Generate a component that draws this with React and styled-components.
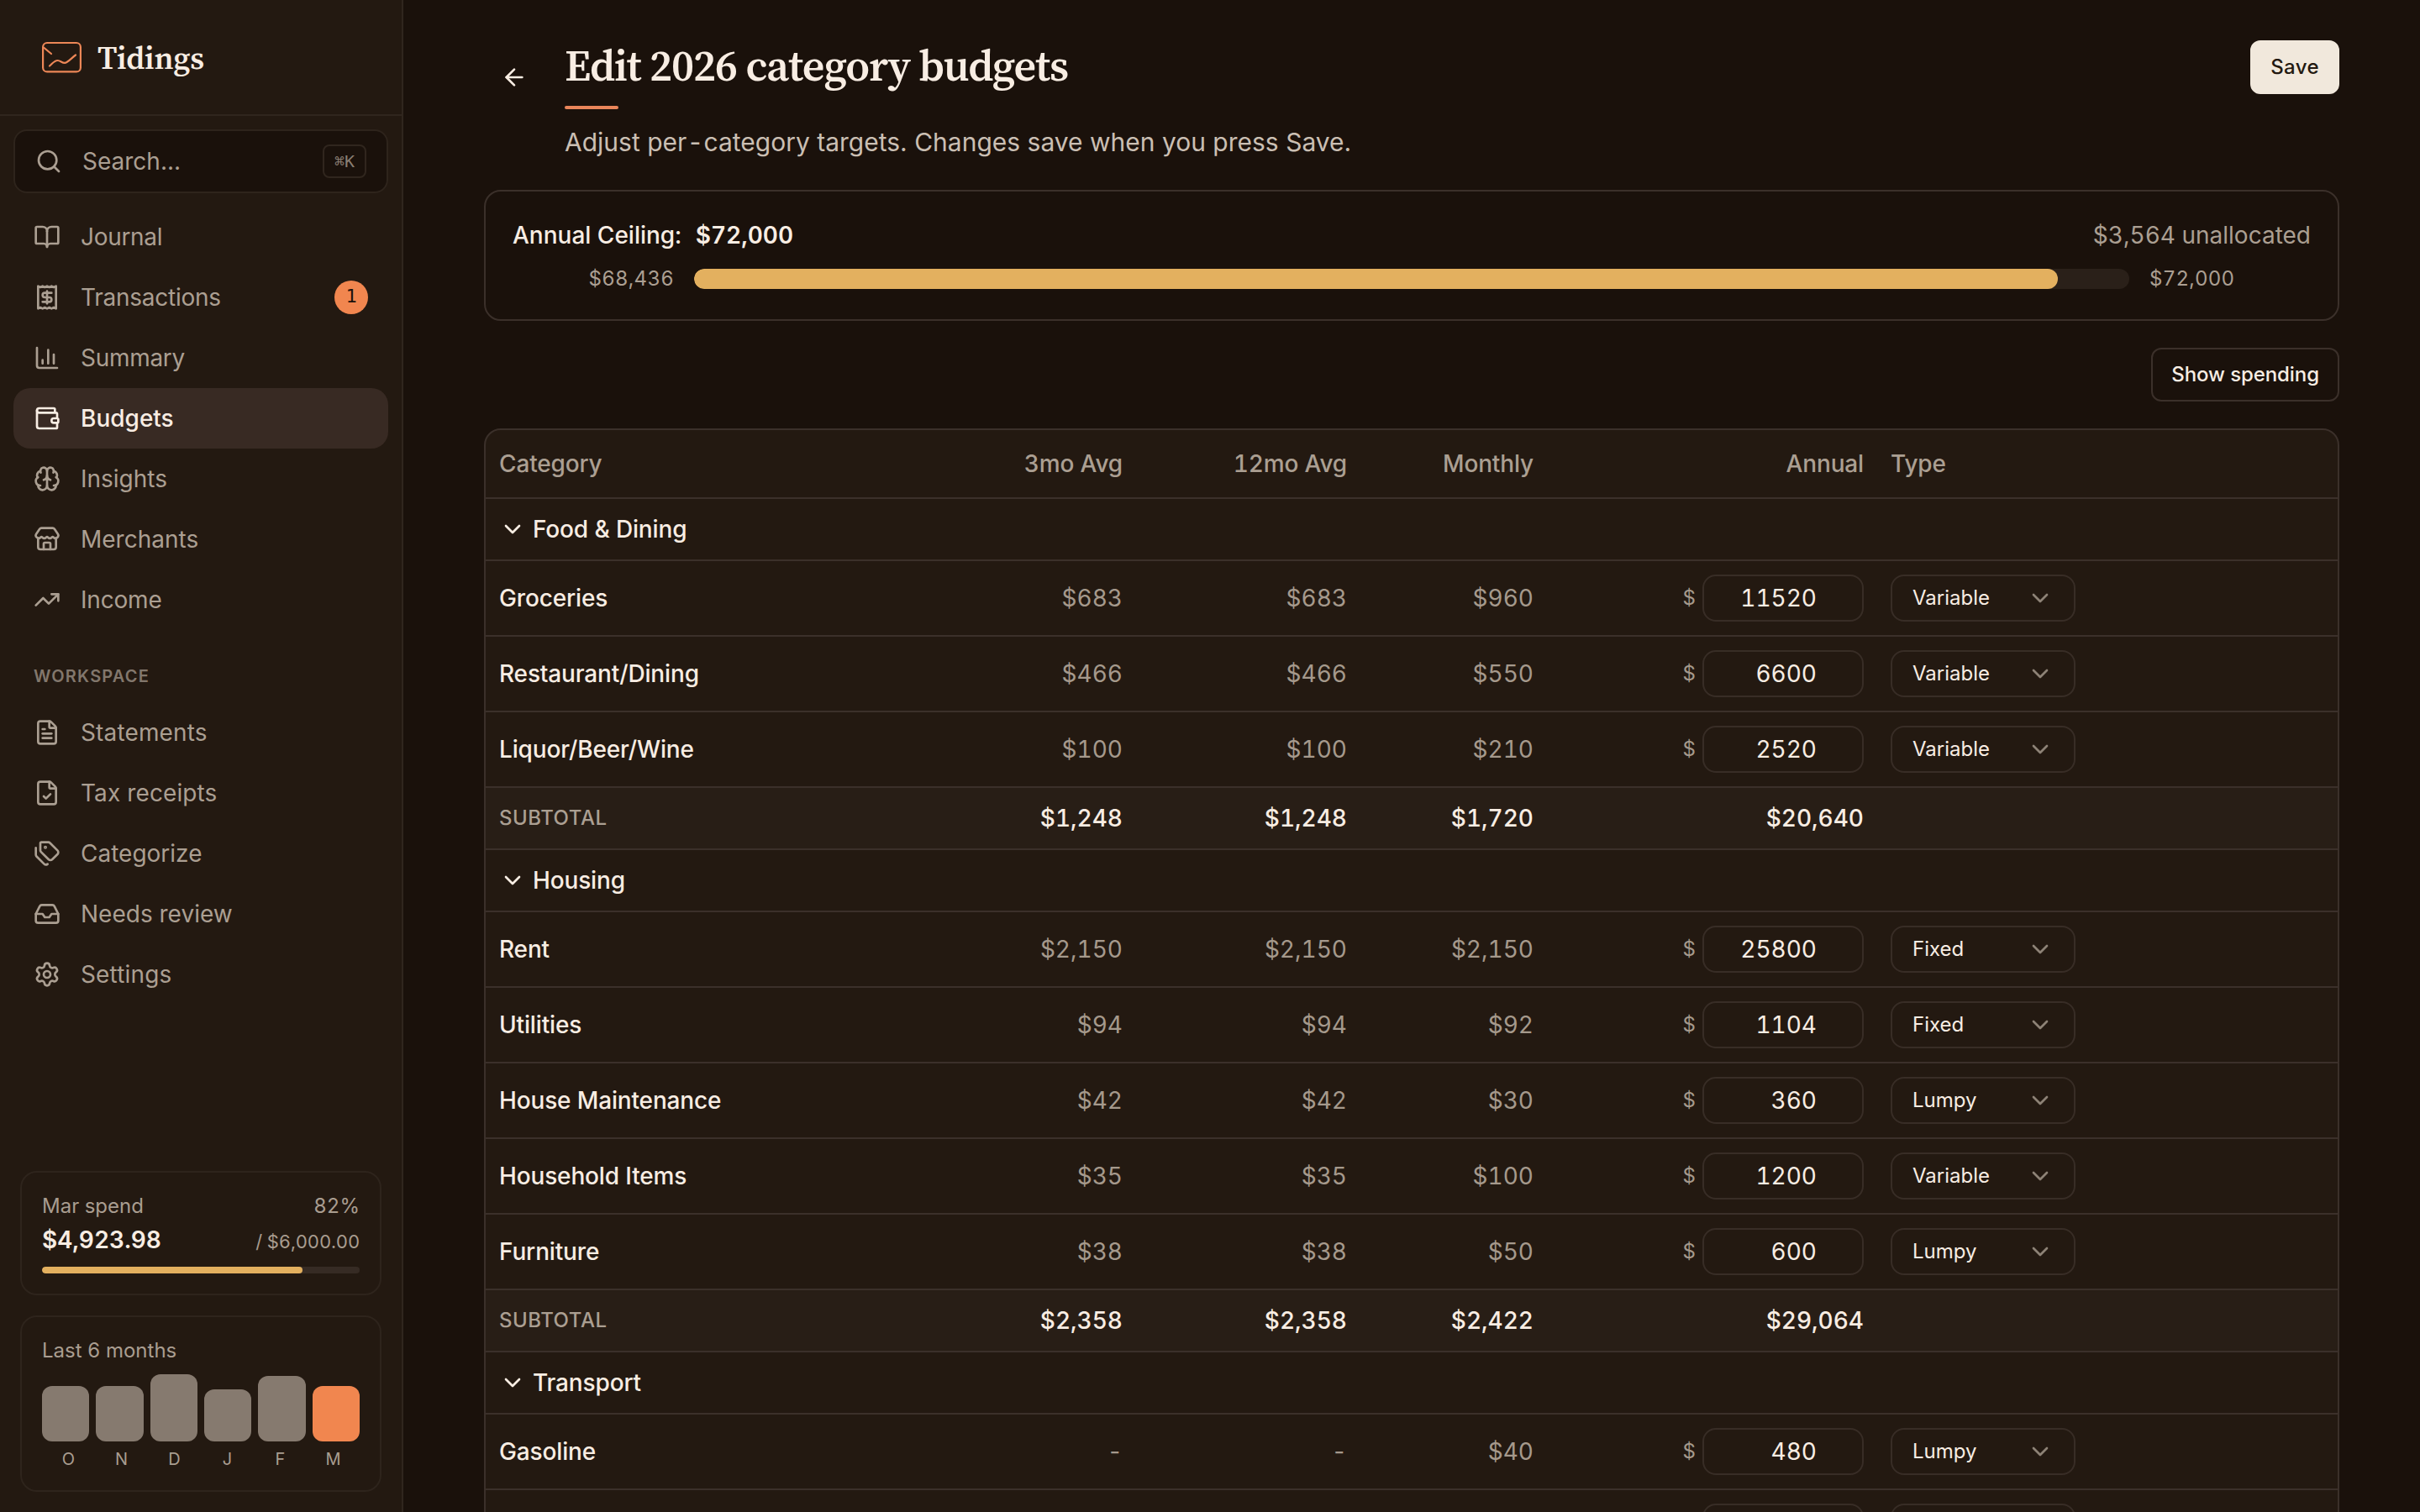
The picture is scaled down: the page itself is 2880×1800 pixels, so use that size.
import React from 'react';
import styled, { createGlobalStyle } from 'styled-components';
import {
  ArrowLeft,
  BookOpen,
  Brain,
  ChartColumn,
  ChevronDown,
  FileCheck,
  FileText,
  Inbox,
  Receipt,
  Search,
  Settings,
  Store,
  Tags,
  TrendingUp,
  Wallet,
} from 'lucide-react';

const GlobalStyle = createGlobalStyle`
  * {
    box-sizing: border-box;
  }

  body {
    margin: 0;
    background: #1a110b;
    color: #f8ede3;
    font-family: Inter, 'Liberation Sans', sans-serif;
    font-size: 28px;
    line-height: 40px;
  }

  button, input {
    font: inherit;
    color: inherit;
  }
`;

const serif = "'Source Serif 4', 'Source Serif Pro', 'Noto Serif CJK SC', 'Noto Serif', 'Liberation Serif', serif";
const mono = "'DejaVu Sans Mono', 'Liberation Mono', monospace";

const Page = styled.div`
  display: flex;
  height: 1800px;
  overflow: hidden;
`;

/* ---------- sidebar ---------- */

const Sidebar = styled.aside`
  display: flex;
  flex-direction: column;
  flex: none;
  width: 480px;
  height: 100%;
  background: #231911;
  border-right: 2px solid #30261e;
`;

const Brand = styled.div`
  display: flex;
  align-items: center;
  gap: 18px;
  height: 138px;
  padding: 0 48px;
  border-bottom: 2px solid #30261e;
`;

const BrandName = styled.span`
  padding-top: 2px;
  font-family: ${serif};
  font-size: 38px;
  font-weight: 600;
  letter-spacing: -0.3px;
  line-height: 48px;
`;

const SearchBox = styled.div`
  display: flex;
  align-items: center;
  gap: 24px;
  height: 76px;
  margin: 16px;
  padding: 0 24px;
  background: #1a110b;
  border: 2px solid #2e241c;
  border-radius: 16px;
  color: #ab9f92;

  span {
    flex: 1;
  }
`;

const Kbd = styled.kbd`
  display: flex;
  align-items: center;
  justify-content: center;
  width: 52px;
  height: 40px;
  border: 2px solid #30261e;
  border-radius: 8px;
  color: #8a7f73;
  font-family: ${mono};
  font-size: 20px;
  line-height: 30px;
`;

const Nav = styled.nav`
  display: flex;
  flex-direction: column;
  padding: 0 16px;
`;

const NavItem = styled.a`
  display: flex;
  align-items: center;
  gap: 24px;
  height: 72px;
  padding: 0 24px;
  border-radius: 20px;
  color: ${(props) => (props.$active ? '#f8ede3' : '#ab9f92')};
  background: ${(props) => (props.$active ? '#382a23' : 'transparent')};
  font-weight: ${(props) => (props.$active ? 500 : 400)};
  letter-spacing: ${(props) => props.$tracking || 0}px;

  span {
    flex: 1;
  }
`;

const Badge = styled.em`
  width: 40px;
  height: 40px;
  border-radius: 50%;
  background: #f1864f;
  color: #1a110b;
  font-family: ${mono};
  font-size: 22px;
  font-style: normal;
  letter-spacing: 0;
  line-height: 37px;
  text-align: center;
`;

const NavHeading = styled.h2`
  margin: 0;
  padding: 40px 24px 16px;
  color: #82776c;
  font-size: 20px;
  font-weight: 600;
  letter-spacing: 1.2px;
  line-height: 30px;
  text-transform: uppercase;
`;

const SidebarCards = styled.div`
  display: flex;
  flex-direction: column;
  gap: 24px;
  margin-top: auto;
  padding: 24px;
`;

const MiniCard = styled.section`
  padding: 24px;
  border: 2px solid #2e241c;
  border-radius: 20px;
  color: #a99d90;
  font-size: 24px;
  line-height: 32px;
`;

const SplitRow = styled.div`
  display: flex;
  align-items: baseline;
  justify-content: space-between;
  font-variant-numeric: tabular-nums;
`;

const SpendRow = styled(SplitRow)`
  height: 40px;
  margin: 4px 0 12px;
  line-height: 40px;

  strong {
    color: #f8ede3;
    font-size: 28px;
    font-weight: 600;
  }

  span {
    font-size: 22px;
    letter-spacing: -0.15px;
  }
`;

const Track = styled.div`
  flex: 1;
  height: ${(props) => props.$height}px;
  border-radius: ${(props) => props.$height / 2}px;
  background: ${(props) => props.$color};
  overflow: hidden;
`;

const Fill = styled.div`
  height: 100%;
  border-radius: inherit;
  background: #e3b05f;
`;

const Bars = styled.div`
  display: flex;
  align-items: flex-end;
  gap: 8px;
  height: 80px;
  margin-top: 12px;
`;

const Bar = styled.div`
  flex: 1;
  border-radius: 12px;
  background: ${(props) => (props.$current ? '#f1864f' : '#867a6f')};
`;

const BarLabels = styled.div`
  display: grid;
  grid-template-columns: repeat(6, 1fr);
  margin-top: 8px;
  font-size: 20px;
  line-height: 26px;
  text-align: center;
`;

/* ---------- main ---------- */

const Main = styled.main`
  flex: 1;
  display: flex;
  flex-direction: column;
  gap: 32px;
  padding: 48px 96px 0;
`;

const Header = styled.header`
  display: flex;
  flex: none;
  align-items: flex-start;
  height: 146px;
`;

const BackButton = styled.button`
  display: flex;
  align-items: center;
  justify-content: center;
  width: 72px;
  height: 72px;
  margin: 8px 24px 0 0;
  padding: 0;
  border: 0;
  background: none;
`;

const Heading = styled.div`
  flex: 1;
`;

const Title = styled.h1`
  margin: 0;
  font-family: ${serif};
  font-size: 52px;
  font-weight: 600;
  letter-spacing: -1.08px;
  line-height: 60px;
`;

const Accent = styled.div`
  width: 64px;
  height: 4px;
  margin: 18px 0 17px;
  border-radius: 2px;
  background: #ea855a;
`;

const Subtitle = styled.p`
  margin: 0;
  color: #cabfb3;
  font-size: 30px;
  line-height: 44px;
`;

const Hyphen = styled.span`
  margin: 0 3.2px;
`;

const Button = styled.button`
  height: 64px;
  padding: 0 22px;
  border: 2px solid ${(props) => (props.$primary ? '#f1e8dc' : '#3b302a')};
  border-radius: 12px;
  background: ${(props) => (props.$primary ? '#f1e8dc' : 'transparent')};
  color: ${(props) => (props.$primary ? '#231911' : '#f8ede3')};
  font-size: 24px;
  font-weight: 500;
  letter-spacing: ${(props) => (props.$primary ? 0.4 : -0.08)}px;
  line-height: 36px;
`;

const CeilingCard = styled.section`
  flex: none;
  height: 156px;
  padding: 32px;
  border: 2px solid #3b302a;
  border-radius: 20px;
`;

const CeilingTop = styled(SplitRow)`
  color: #ab9f92;

  div {
    color: #f8ede3;
    font-weight: 500;
  }

  strong {
    margin-left: 17px;
    font-weight: 600;
  }
`;

const CeilingBar = styled.div`
  display: flex;
  align-items: center;
  gap: 24px;
  margin-top: 16px;
  color: #ab9f92;
  font-size: 24px;
  font-variant-numeric: tabular-nums;
  letter-spacing: 0.25px;
  line-height: 32px;
`;

const CeilingLabel = styled.span`
  width: 192px;
  text-align: ${(props) => props.$align};
`;

const Toolbar = styled.div`
  display: flex;
  flex: none;
  justify-content: flex-end;
`;

const Table = styled.section`
  flex: none;
  border: 2px solid #3b302a;
  border-radius: 20px;
  background: #231911;
  overflow: hidden;
`;

const Row = styled.div`
  display: grid;
  grid-template-columns: 541px 233px 267px 222px 393px 1fr;
  align-items: center;
  height: ${(props) => props.$height || 90}px;
  border-bottom: 2px solid #3b302a;
  background: ${(props) => props.$bg || 'transparent'};
  color: ${(props) => props.$color || '#f8ede3'};
  font-variant-numeric: tabular-nums;
  font-weight: 500;
`;

const Cell = styled.div`
  padding: 0 16px;
  text-align: ${(props) => props.$align || 'left'};
`;

const HeadCell = styled(Cell)`
  letter-spacing: -0.15px;
`;

const NameCell = styled(Cell)`
  letter-spacing: -0.15px;
`;

const MutedCell = styled(Cell)`
  color: #a5998c;
  font-weight: 400;
`;

const GroupName = styled.div`
  display: flex;
  align-items: center;
  gap: 8px;
  padding: 0 16px;
  letter-spacing: -0.15px;
`;

const SubtotalLabel = styled(Cell)`
  color: #ab9f92;
  font-size: 24px;
  letter-spacing: 0.5px;
  text-transform: uppercase;
`;

const AnnualCell = styled(Cell)`
  display: flex;
  align-items: center;
  justify-content: flex-end;
  gap: 8px;
  color: #a5998c;
  font-size: 24px;
  font-weight: 400;
`;

const AmountInput = styled.input`
  width: 192px;
  height: 56px;
  padding: 0 54px 0 16px;
  border: 2px solid #382d26;
  border-radius: 16px;
  outline: 0;
  background: transparent;
  color: #f8ede3;
  font-size: 28px;
  font-variant-numeric: tabular-nums;
  text-align: right;
`;

const TypeSelect = styled.button`
  display: flex;
  align-items: center;
  justify-content: space-between;
  width: 220px;
  height: 56px;
  padding: 0 24px;
  border: 2px solid #382d26;
  border-radius: 16px;
  background: transparent;
  font-size: 24px;
  font-weight: 400;

  svg {
    color: #8d8276;
  }
`;

const mainNav = [
  { label: 'Journal', icon: BookOpen, tracking: -0.3 },
  { label: 'Transactions', icon: Receipt, tracking: -0.25, badge: 1 },
  { label: 'Summary', icon: ChartColumn, tracking: -0.3 },
  { label: 'Budgets', icon: Wallet, active: true },
  { label: 'Insights', icon: Brain },
  { label: 'Merchants', icon: Store },
  { label: 'Income', icon: TrendingUp, tracking: -0.2 },
];

const workspaceNav = [
  { label: 'Statements', icon: FileText, tracking: 0.15 },
  { label: 'Tax receipts', icon: FileCheck, tracking: 0.1 },
  { label: 'Categorize', icon: Tags },
  { label: 'Needs review', icon: Inbox },
  { label: 'Settings', icon: Settings, tracking: 0.15 },
];

const months = [
  { label: 'O', height: 66 },
  { label: 'N', height: 66 },
  { label: 'D', height: 80 },
  { label: 'J', height: 62 },
  { label: 'F', height: 78 },
  { label: 'M', height: 66 },
];

const groups = [
  {
    name: 'Food & Dining',
    rows: [
      ['Groceries', '$683', '$683', '$960', '11520', 'Variable'],
      ['Restaurant/Dining', '$466', '$466', '$550', '6600', 'Variable'],
      ['Liquor/Beer/Wine', '$100', '$100', '$210', '2520', 'Variable'],
    ],
    subtotal: ['$1,248', '$1,248', '$1,720', '$20,640'],
  },
  {
    name: 'Housing',
    rows: [
      ['Rent', '$2,150', '$2,150', '$2,150', '25800', 'Fixed'],
      ['Utilities', '$94', '$94', '$92', '1104', 'Fixed'],
      ['House Maintenance', '$42', '$42', '$30', '360', 'Lumpy'],
      ['Household Items', '$35', '$35', '$100', '1200', 'Variable'],
      ['Furniture', '$38', '$38', '$50', '600', 'Lumpy'],
    ],
    subtotal: ['$2,358', '$2,358', '$2,422', '$29,064'],
  },
  {
    name: 'Transport',
    rows: [
      ['Gasoline', '-', '-', '$40', '480', 'Lumpy'],
      ['', '', '', '', '', ''],
    ],
  },
];

const Logo = () => (
  <svg width="50" height="40" viewBox="0 0 50 40" fill="none" stroke="#ed8757" strokeWidth="2.2" strokeLinecap="round" strokeLinejoin="round">
    <rect x="3.1" y="3" width="44.8" height="34.4" rx="5" />
    <path d="M4.500 9L13 16" />
    <path d="M11 30.500C15 27 17 24 20.500 24C24 24 25.500 26.900 29 26.900C32.500 26.900 37 21 42 17.500" />
  </svg>
);

const NavLink = ({ item }) => {
  const Icon = item.icon;
  return (
    <NavItem $active={item.active} $tracking={item.tracking}>
      <Icon size={32} />
      <span>{item.label}</span>
      {item.badge && <Badge>{item.badge}</Badge>}
    </NavItem>
  );
};

const BudgetRow = ({ row }) => {
  const [name, avg3, avg12, monthly, annual, type] = row;
  return (
    <Row>
      <NameCell>{name}</NameCell>
      <MutedCell $align="right">{avg3}</MutedCell>
      <MutedCell $align="right">{avg12}</MutedCell>
      <MutedCell $align="right">{monthly}</MutedCell>
      <AnnualCell>
        {annual && '$'}
        <AmountInput defaultValue={annual} />
      </AnnualCell>
      <Cell>
        <TypeSelect>
          {type}
          <ChevronDown size={32} />
        </TypeSelect>
      </Cell>
    </Row>
  );
};

const BudgetGroup = ({ group }) => (
  <>
    <Row $height={74}>
      <GroupName>
        <ChevronDown size={32} />
        {group.name}
      </GroupName>
    </Row>
    {group.rows.map((row, index) => (
      <BudgetRow key={index} row={row} />
    ))}
    {group.subtotal && (
      <Row $height={74} $bg="#281e16">
        <SubtotalLabel>Subtotal</SubtotalLabel>
        {group.subtotal.map((value, index) => (
          <Cell key={index} $align="right">{value}</Cell>
        ))}
      </Row>
    )}
  </>
);

const App = () => (
  <Page>
    <GlobalStyle />
    <Sidebar>
      <Brand>
        <Logo />
        <BrandName>Tidings</BrandName>
      </Brand>
      <SearchBox>
        <Search size={32} />
        <span>Search...</span>
        <Kbd>⌘K</Kbd>
      </SearchBox>
      <Nav>
        {mainNav.map((item) => (
          <NavLink key={item.label} item={item} />
        ))}
        <NavHeading>Workspace</NavHeading>
        {workspaceNav.map((item) => (
          <NavLink key={item.label} item={item} />
        ))}
      </Nav>
      <SidebarCards>
        <MiniCard>
          <SplitRow>
            <span>Mar spend</span>
            <span>82%</span>
          </SplitRow>
          <SpendRow>
            <strong>$4,923.98</strong>
            <span>/ $6,000.00</span>
          </SpendRow>
          <Track $height={8} $color="#362b24">
            <Fill style={{ width: '82%' }} />
          </Track>
        </MiniCard>
        <MiniCard>
          Last 6 months
          <Bars>
            {months.map((month, index) => (
              <Bar key={month.label} $current={index === 5} style={{ height: month.height }} />
            ))}
          </Bars>
          <BarLabels>
            {months.map((month) => (
              <span key={month.label}>{month.label}</span>
            ))}
          </BarLabels>
        </MiniCard>
      </SidebarCards>
    </Sidebar>

    <Main>
      <Header>
        <BackButton>
          <ArrowLeft size={32} />
        </BackButton>
        <Heading>
          <Title>Edit 2026 category budgets</Title>
          <Accent />
          <Subtitle>
            Adjust per<Hyphen>-</Hyphen>category targets. Changes save when you press Save.
          </Subtitle>
        </Heading>
        <Button $primary>Save</Button>
      </Header>

      <CeilingCard>
        <CeilingTop>
          <div>
            Annual Ceiling:<strong>$72,000</strong>
          </div>
          <span>$3,564 unallocated</span>
        </CeilingTop>
        <CeilingBar>
          <CeilingLabel $align="right">$68,436</CeilingLabel>
          <Track $height={24} $color="#2a2019">
            <Fill style={{ width: '95.05%' }} />
          </Track>
          <CeilingLabel $align="left">$72,000</CeilingLabel>
        </CeilingBar>
      </CeilingCard>

      <Toolbar>
        <Button>Show spending</Button>
      </Toolbar>

      <Table>
        <Row $height={82} $color="#ab9f92">
          <HeadCell>Category</HeadCell>
          <HeadCell $align="right">3mo Avg</HeadCell>
          <HeadCell $align="right">12mo Avg</HeadCell>
          <HeadCell $align="right">Monthly</HeadCell>
          <HeadCell $align="right">Annual</HeadCell>
          <HeadCell>Type</HeadCell>
        </Row>
        {groups.map((group) => (
          <BudgetGroup key={group.name} group={group} />
        ))}
      </Table>
    </Main>
  </Page>
);

export default App;
